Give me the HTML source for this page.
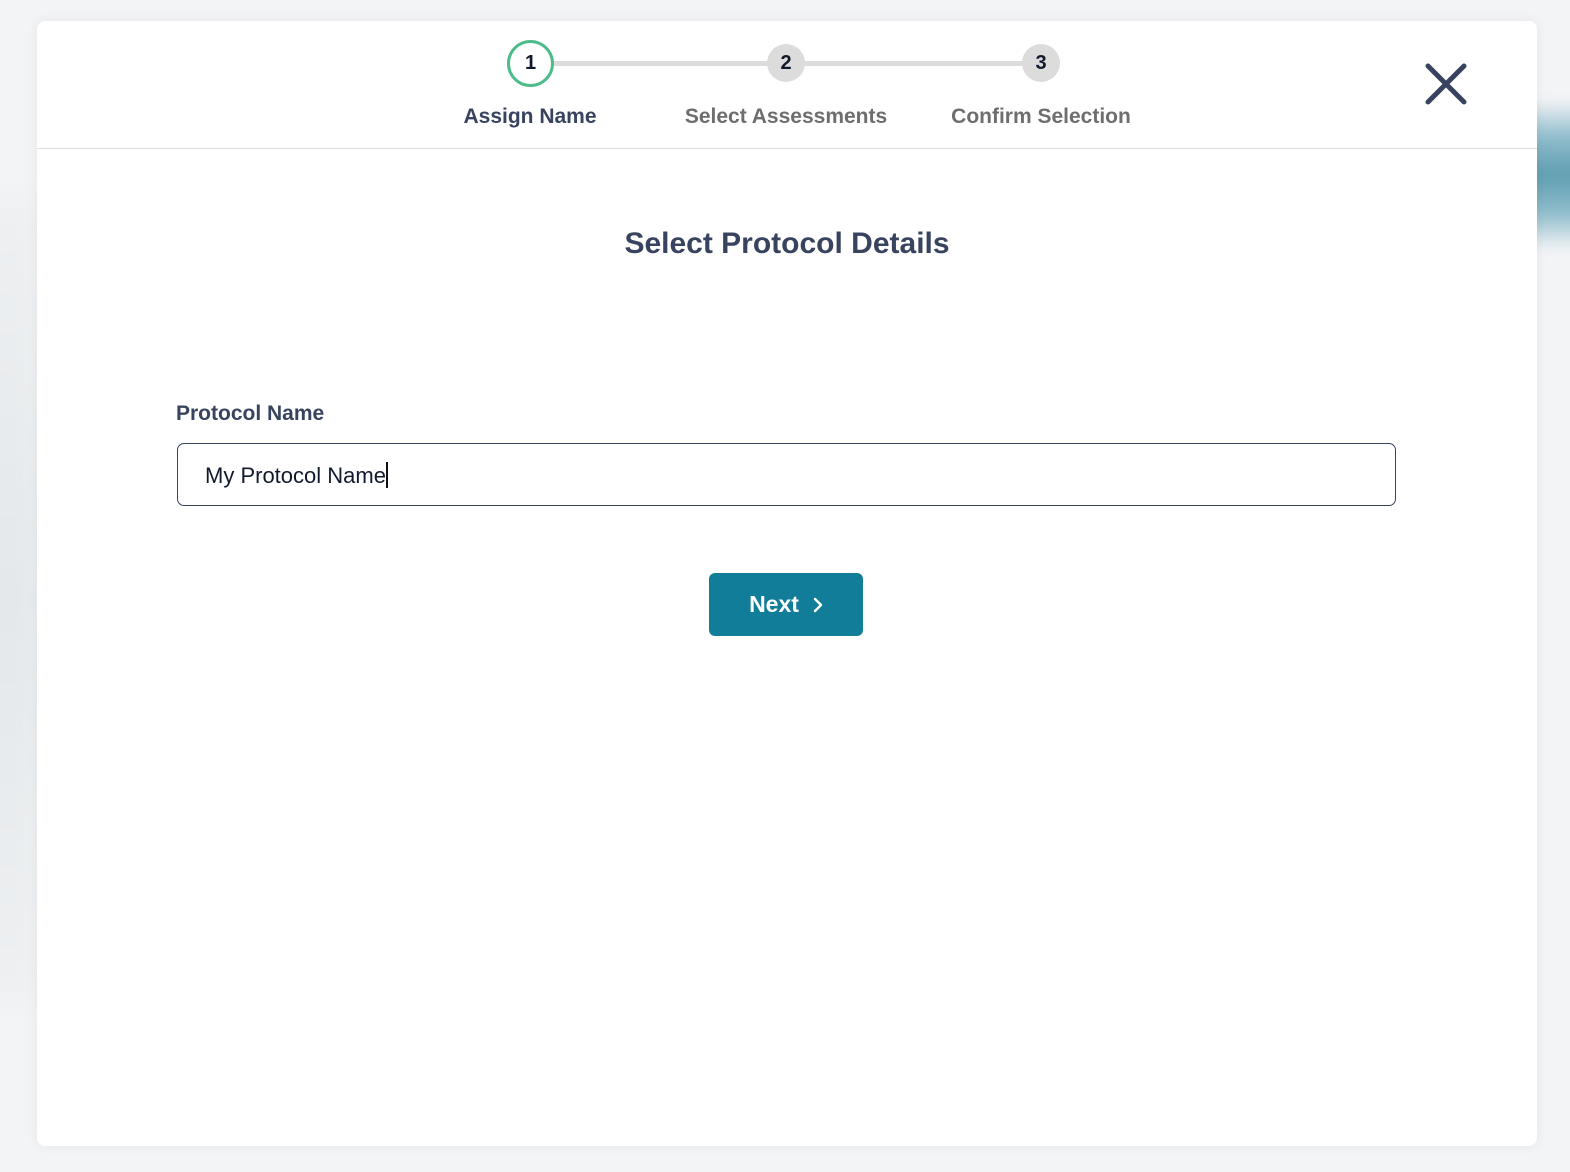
<!DOCTYPE html>
<html><head><style>
*{margin:0;padding:0;box-sizing:border-box}
body{width:1570px;height:1172px;overflow:hidden;font-family:"Liberation Sans",sans-serif;background:#f3f4f6;position:relative}
.glow{position:absolute;left:1515px;top:100px;width:80px;height:150px;background:linear-gradient(rgba(243,244,246,0),#8fbccb 25%,#5f9fb2 50%,#8fbccb 75%,rgba(243,244,246,0));filter:blur(6px)}
.glow2{position:absolute;left:-40px;top:200px;width:80px;height:800px;background:linear-gradient(#eef0f2,#e4e8ea,#eef0f2);filter:blur(10px)}
.modal{position:absolute;left:37px;top:21px;width:1500px;height:1125px;background:#fff;border-radius:8px;box-shadow:0 0 12px rgba(0,0,0,.06)}
.hdr{position:absolute;left:0;top:0;width:100%;height:128px;border-bottom:1.5px solid #dcdcdc}
.line{position:absolute;top:40px;height:5px;background:#dcdcdc}
.c{position:absolute;border-radius:50%;display:flex;align-items:center;justify-content:center;font-weight:bold;font-size:20px;color:#111a2c}
.lbl{position:absolute;top:84px;font-weight:bold;font-size:21px;transform:translateX(-50%);white-space:nowrap}
</style></head><body>
<div class="glow"></div><div class="glow2"></div>
<div class="modal">
<div class="hdr">
<div class="line" style="left:517px;width:470px"></div>
<div class="c" style="left:470px;top:19px;width:47px;height:47px;border:3px solid #4dbb8a;background:#fff">1</div>
<div class="c" style="left:730px;top:23px;width:38px;height:38px;background:#dcdcdc">2</div>
<div class="c" style="left:985px;top:23px;width:38px;height:38px;background:#dcdcdc">3</div>
<div class="lbl" style="left:493px;color:#38445f">Assign Name</div>
<div class="lbl" style="left:749px;color:#6e6e6e">Select Assessments</div>
<div class="lbl" style="left:1004px;color:#6e6e6e">Confirm Selection</div>
<svg style="position:absolute;left:1386px;top:40px" width="46" height="46" viewBox="0 0 46 46"><path d="M5 5L41 41M41 5L5 41" stroke="#38445f" stroke-width="5" stroke-linecap="round"/></svg>
</div>
<div style="position:absolute;left:0;width:100%;top:206px;text-align:center;font-size:30px;font-weight:bold;color:#38445f">Select Protocol Details</div>
<div style="position:absolute;left:139px;top:381px;font-size:21px;font-weight:bold;color:#38445f">Protocol Name</div>
<div style="position:absolute;left:140px;top:422px;width:1219px;height:63px;border:1.5px solid #38445f;border-radius:7px;padding-left:27px;line-height:63px;font-size:22px;color:#111a2c">My Protocol Name<span style="display:inline-block;width:2px;height:26px;background:#111;vertical-align:middle;margin-top:-4px"></span></div>
<div style="position:absolute;left:672px;top:552px;width:154px;height:63px;background:#127d99;border-radius:6px;color:#fff;font-weight:bold;font-size:23px;display:flex;align-items:center;justify-content:center;gap:14px">Next<svg width="10" height="16" viewBox="0 0 10 16"><path d="M2 2L8 8L2 14" stroke="#fff" stroke-width="2.4" fill="none" stroke-linecap="round" stroke-linejoin="round"/></svg></div>
</div>
</body></html>
